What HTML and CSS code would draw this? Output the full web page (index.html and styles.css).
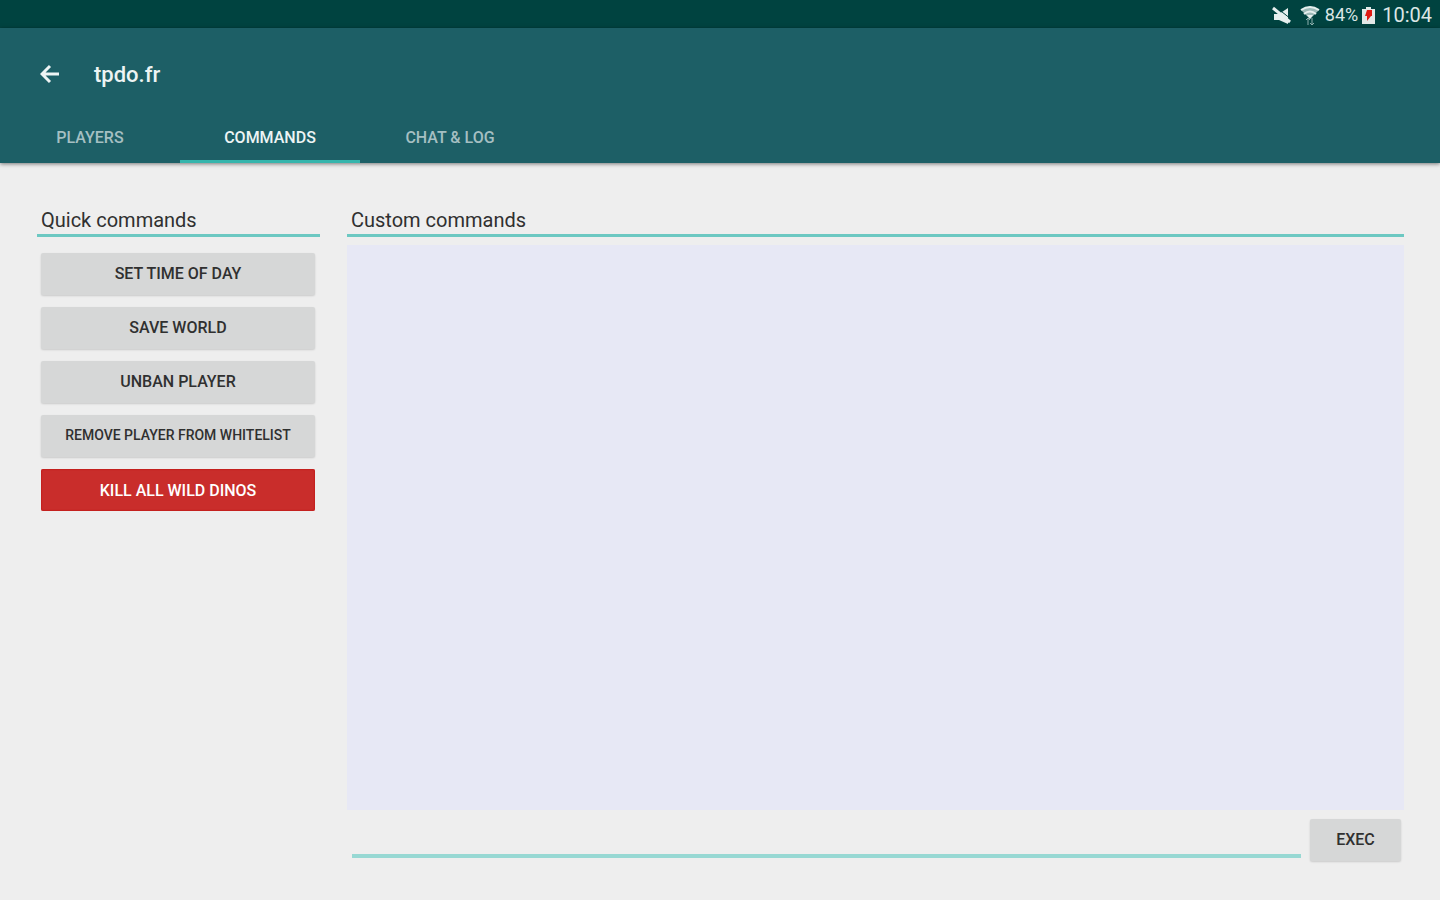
FILE: index.html
```html
<!DOCTYPE html>
<html lang="en">
  <head>
    <meta charset="UTF-8" />
    <meta
      name="viewport"
      content="width=device-width, initial-scale=1.0" />
    <title>tpdo.fr</title>
    <link rel="stylesheet" href="styles.css">
  </head>
  <body>
    <div class="status-bar">
      <svg class="icon-mute" viewBox="0 0 20 20" width="20" height="20" aria-hidden="true">
        <path d="M2 9h5l9-6v16l-9-4H2z" fill="#e6efee" />
        <path d="M5 3l14 11" stroke="#004340" stroke-width="1" />
        <path d="M1 3l17 14" stroke="#e6efee" stroke-width="3" />
      </svg>
      <svg class="icon-wifi" viewBox="0 0 20 20" width="20" height="20" aria-hidden="true">
        <path d="M1 5q9-7 18 0l-9 9z" fill="#9dbab8" />
        <path d="M1 5q9-6 18 0M4 9q6-5 12 0" fill="none" stroke="#e6efee" stroke-width="2" />
        <path d="M7 10h6l-3 4z" fill="#e6efee" />
        <path d="M8 13v7M6 15l2-2 2 2M12 13v7M10 18l2 2 2-2" fill="none" stroke="#8fb0ae" stroke-width="1" />
      </svg>
      <span class="battery-level">84%</span>
      <svg class="icon-battery" viewBox="0 0 13 18" width="13" height="18" aria-hidden="true">
        <path d="M4 1h5v2h4v15H0V3h4z" fill="#e3e9e8" />
        <path d="M5 4h5v6H9l-4 5V10H3z" fill="#e01b14" />
      </svg>
      <span class="clock">10:04</span>
    </div>

    <header class="app-bar">
      <div class="toolbar">
        <button class="back" type="button" aria-label="Back">
          <svg viewBox="0 0 20 20" width="20" height="20" aria-hidden="true">
            <path d="M19 10H3M10 2l-8 8 8 8" fill="none" stroke="#edf4f4" stroke-width="3" />
          </svg>
        </button>
        <h1>tpdo.fr</h1>
      </div>
      <nav class="tabs">
        <a href="#players">PLAYERS</a>
        <a class="active" href="#commands" aria-current="page">COMMANDS</a>
        <a href="#chat">CHAT &amp; LOG</a>
      </nav>
    </header>

    <main class="content">
      <section class="quick">
        <h2>Quick commands</h2>
        <div class="quick-list">
          <button class="btn" type="button">SET TIME OF DAY</button>
          <button class="btn" type="button">SAVE WORLD</button>
          <button class="btn" type="button">UNBAN PLAYER</button>
          <button class="btn btn-small" type="button">REMOVE PLAYER FROM WHITELIST</button>
          <button class="btn btn-danger" type="button">KILL ALL WILD DINOS</button>
        </div>
      </section>

      <section class="custom">
        <h2 id="custom-title">Custom commands</h2>
        <div class="output"></div>
        <form class="command-form">
          <input class="command" type="text" aria-labelledby="custom-title" />
          <button class="btn btn-exec" type="submit">EXEC</button>
        </form>
      </section>
    </main>
  </body>
</html>
```
FILE: styles.css
```css
* {
  box-sizing: border-box;
}

body {
  display: flex;
  flex-direction: column;
  min-height: 100vh;
  margin: 0;
  background: #eeeeee;
  color: #303030;
  font-family: Roboto, sans-serif;
}

button,
input {
  font-family: inherit;
}

h1,
h2 {
  margin: 0;
}

.status-bar {
  display: flex;
  justify-content: flex-end;
  align-items: center;
  height: 28px;
  padding: 1px 8px 0;
  background: #004340;
  color: #dbe6e5;
}

.icon-wifi {
  margin: 0 5px 0 8px;
}

.battery-level {
  margin-right: 4px;
  font-size: 18px;
}

.clock {
  margin-left: 7px;
  font-size: 20px;
}

.app-bar {
  position: relative;
  background: #1d5f66;
  box-shadow: 0 1px 4px rgba(0, 0, 0, 0.5);
}

.toolbar {
  display: flex;
  align-items: center;
  gap: 34px;
  height: 92px;
  padding: 0 40px;
}

.back {
  display: flex;
  padding: 0;
  border: 0;
  background: none;
}

.toolbar h1 {
  color: #edf4f4;
  font-size: 22px;
  font-weight: 500;
}

.tabs {
  display: flex;
}

.tabs a {
  width: 180px;
  height: 43px;
  border-bottom: 3px solid transparent;
  color: #a5bfc2;
  font-size: 16px;
  font-weight: 500;
  line-height: 36px;
  text-align: center;
  text-decoration: none;
}

.tabs .active {
  border-color: #35b5ac;
  color: #edf4f4;
}

.content {
  display: flex;
  flex: 1;
  gap: 27px;
  padding: 44px 36px 39px 37px;
}

.quick {
  flex: 0 0 283px;
}

.content h2 {
  padding: 0 4px;
  border-bottom: 3px solid #6cc8c2;
  font-size: 20px;
  font-weight: 400;
  line-height: 27px;
}

.quick-list {
  display: flex;
  flex-direction: column;
  gap: 12px;
  padding: 16px 5px 0 4px;
}

.btn {
  height: 42px;
  padding: 0 0 2px;
  border: 0;
  border-radius: 2px;
  background: #d6d7d7;
  box-shadow: 0 1px 2px rgba(0, 0, 0, 0.15);
  color: #303030;
  font-size: 16px;
  font-weight: 500;
}

.btn-small {
  font-size: 14px;
}

.btn-danger {
  padding: 0;
  background: #c92d2b;
  box-shadow: inset 0 0 2px #b80000;
  color: #ffffff;
}

.custom {
  display: flex;
  flex: 1;
  flex-direction: column;
}

.output {
  flex: 1;
  margin-top: 8px;
  background: #e7e8f5;
}

.command-form {
  display: flex;
  gap: 9px;
  padding: 9px 3px 0 5px;
}

.command {
  flex: 1;
  min-width: 0;
  height: 39px;
  padding: 0;
  border: 0;
  border-bottom: 4px solid #97d8d3;
  outline: 0;
  background: none;
  font-size: 20px;
}

.btn-exec {
  width: 91px;
}
```
